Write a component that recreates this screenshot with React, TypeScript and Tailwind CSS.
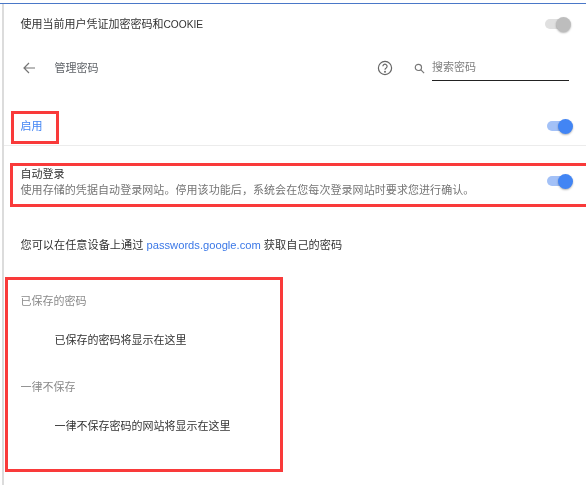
import React from "react";

const font = { fontFamily: '"Liberation Sans", "Noto Sans CJK SC", sans-serif' };

function Toggle({ on }: { on?: boolean }) {
  return (
    <div className="relative w-[26px] h-[18px] shrink-0">
      <div className={`absolute left-0 top-[4px] w-[24px] h-[10px] rounded-full ${on ? "bg-[#a3c1f7]" : "bg-[#e0e0e0]"}`} />
      <div className={`absolute right-0 top-[2px] w-[15px] h-[15px] rounded-full shadow-[0_1px_2px_rgba(0,0,0,0.3)] ${on ? "bg-[#4285f4]" : "bg-[#bdbdbd]"}`} />
    </div>
  );
}

export default function App() {
  return (
    <div className="relative w-[586px] h-[485px] overflow-hidden bg-white text-[11px] text-[#333]" style={font}>
      <div className="flex flex-col pl-[20.5px] pr-[13px] pt-[15px] blur-[0.3px]">
        <div className="flex items-center justify-between h-[18px]">
          <span>使用当前用户凭证加密密码和<span className="text-[10.2px]">COOKIE</span></span>
          <div className="mr-[2px]"><Toggle /></div>
        </div>

        <div className="flex items-center h-[32px] mt-[19px]">
          <svg width="16" height="16" viewBox="0 0 16 16" fill="none" stroke="#757575" strokeWidth="1.2" className="shrink-0">
            <path d="M14 8H3M8 3L3 8l5 5" />
          </svg>
          <span className="ml-[18px] text-[#5f6368]">管理密码</span>
          <div className="flex-1" />
          <svg width="16" height="16" viewBox="0 0 16 16" fill="none" stroke="#666" strokeWidth="1.2" className="shrink-0">
            <circle cx="8" cy="8" r="6.6" />
            <path d="M5.9 6.3a2.1 2.1 0 1 1 3.3 1.7c-.8.5-1.2.9-1.2 1.8" />
            <circle cx="8" cy="11.8" r=".4" fill="#666" />
          </svg>
          <svg width="11" height="11" viewBox="0 0 12 12" fill="none" stroke="#777" strokeWidth="1.3" className="ml-[21px] shrink-0">
            <circle cx="4.8" cy="4.8" r="3.4" />
            <path d="M7.3 7.3L11 11" />
          </svg>
          <div className="ml-[7px] mr-[4px] w-[137px] h-[29px] self-start border-b border-[#222] flex items-start pt-[6px] text-[#808080]">
            <span className="leading-[18px]">搜索密码</span>
          </div>
        </div>

        <div className="flex items-center justify-between h-[18px] mt-[33px]">
          <span className="text-[#4285f4]">启用</span>
          <Toggle on />
        </div>
        <div className="h-px bg-[#ececec] -ml-[17px] -mr-[13px] mt-[10px]" />

        <div className="flex items-center justify-between mt-[20px]">
          <div className="flex flex-col">
            <span className="leading-[16px]">自动登录</span>
            <span className="leading-[17px] text-[#757575] tracking-[0.07px]">使用存储的凭据自动登录网站。停用该功能后，系统会在您每次登录网站时要求您进行确认。</span>
          </div>
          <div className="-mt-[4px]"><Toggle on /></div>
        </div>

        <div className="mt-[38px] leading-[16px] text-[11.18px]">
          您可以在任意设备上通过 <span className="text-[#3b78e7]">passwords.google.com</span> 获取自己的密码
        </div>

        <div className="mt-[40px] leading-[16px] text-[#8a8a8a]">已保存的密码</div>
        <div className="mt-[23px] ml-[34px] leading-[16px]">已保存的密码将显示在这里</div>
        <div className="mt-[31px] leading-[16px] text-[#8a8a8a]">一律不保存</div>
        <div className="mt-[23px] ml-[34px] leading-[16px]">一律不保存密码的网站将显示在这里</div>
      </div>

      <div className="absolute left-0 right-0 top-[3px] h-px bg-[#4a78c8]" />
      <div className="absolute left-[2px] top-[4px] bottom-0 w-[2px] bg-[#dcdcdc]" />
      <div className="absolute left-[11px] top-[111px] w-[48px] h-[33px] border-[3px] border-[#f93a3a]" />
      <div className="absolute left-[10px] top-[163px] w-[576px] h-[44px] border-[3px] border-[#f93a3a] border-r-0" />
      <div className="absolute left-[5px] top-[277px] w-[278px] h-[195px] border-[3px] border-[#f93a3a]" />
    </div>
  );
}
